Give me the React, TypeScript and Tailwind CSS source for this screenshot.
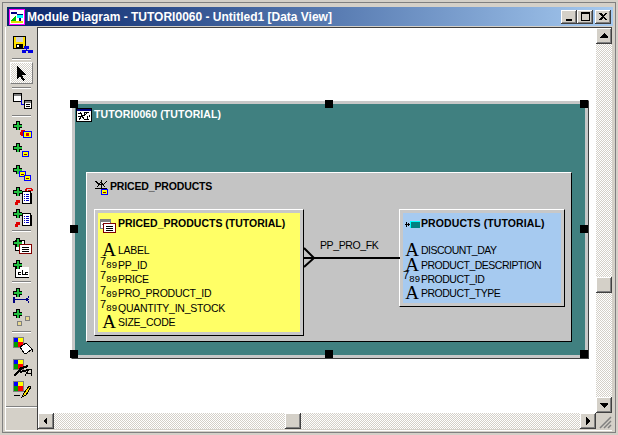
type Box = [number, number, number, number, string]

const BEVEL = 'shadow-[inset_-1px_-1px_#404040,inset_1px_1px_#ffffff,inset_-2px_-2px_#808080,inset_2px_2px_#d4d0c8] bg-[#d4d0c8]'
const DITHER = 'bg-[repeating-conic-gradient(#d4d0c8_0_25%,#ffffff_0_50%)] bg-[length:2px_2px]'

// little pixel-style drawing from plain rects
function Px({ boxes, w = 22, h = 18, children }: { boxes: Box[]; w?: number; h?: number; children?: React.ReactNode }) {
  return (
    <svg width={w} height={h} viewBox={`0 0 ${w} ${h}`} shapeRendering="crispEdges" className="block">
      {boxes.map((b, i) => (
        <rect key={i} x={b[0]} y={b[1]} width={b[2]} height={b[3]} fill={b[4]} />
      ))}
      {children}
    </svg>
  )
}

const plus: Box[] = [
  [3, 0, 4, 9, '#000'],
  [0, 3, 9, 4, '#000'],
  [4, 1, 2, 8, '#22c040'],
  [1, 4, 8, 2, '#22c040'],
]
const smallBox = (x: number, y: number): Box[] => [
  [x, y, 7, 6, '#0000ff'],
  [x + 1, y + 1, 5, 4, '#ffff00'],
  [x + 2, y + 3, 3, 1, '#800000'],
]
const listDoc: Box[] = [
  [9, 4, 9, 13, '#000'],
  [10, 5, 7, 11, '#fff'],
  [11, 7, 1, 1, '#0000c0'], [13, 7, 3, 1, '#0000c0'],
  [11, 9, 1, 1, '#0000c0'], [13, 9, 3, 1, '#0000c0'],
  [11, 11, 1, 1, '#0000c0'], [13, 11, 3, 1, '#0000c0'],
  [11, 13, 1, 1, '#0000c0'], [13, 13, 3, 1, '#0000c0'],
  [17, 6, 2, 11, '#000'],
  [3, 13, 4, 3, '#e00000'], [2, 15, 3, 3, '#e00000'],
]
const palette: Box[] = [
  [0, 0, 11, 11, '#808080'],
  [1, 1, 4, 4, '#0000ff'],
  [5, 1, 5, 4, '#ffff00'],
  [1, 5, 4, 5, '#00a000'],
  [5, 5, 5, 5, '#ff0000'],
]

const Sep = ({ className = '' }: { className?: string }) => (
  <div className={`w-[19px] h-[2px] ml-[6px] border-t border-[#808080] border-b-[1px] border-b-white ${className}`} />
)

const Arrow = ({ d }: { d: string }) => (
  <svg width="16" height="16" viewBox="0 0 16 16" shapeRendering="crispEdges"><path d={d} fill="#000" /></svg>
)

function ScrollBtn({ d }: { d: string }) {
  return <div className={`w-[16px] h-[16px] shrink-0 ${BEVEL}`}><Arrow d={d} /></div>
}

function Toolbar() {
  return (
    <div className="w-[33px] shrink-0 flex flex-col border-r border-[#404040] border-l border-l-white">
      <div className="ml-[7px] mt-[9px]">
        <Px boxes={[
          [0, 0, 13, 13, '#000'], [1, 1, 11, 11, '#ffe000'], [3, 1, 7, 5, '#d0d0d0'], [3, 8, 7, 4, '#000'], [4, 9, 2, 2, '#fff'],
          [11, 10, 5, 3, '#0000e0'], [13, 13, 1, 2, '#0000e0'], [9, 14, 11, 1, '#0000e0'], [9, 15, 4, 2, '#0000e0'], [15, 15, 5, 2, '#0000e0'],
        ]} />
      </div>
      <Sep className="mt-[4px]" />
      <div className={`mt-[2px] ml-[4px] w-[23px] h-[22px] border border-t-white border-l-white border-r-[#808080] border-b-[#808080] flex items-center justify-center ${DITHER}`}>
        <svg width="10" height="15" viewBox="0 0 10 15" shapeRendering="crispEdges"><path d="M0 0v13l3-3 3 5 2-1-3-5h4z" fill="#000" /></svg>
      </div>
      <Sep className="mt-[3px]" />
      <div className="ml-[7px] mt-[4px]">
        <Px boxes={[
          [0, 0, 9, 9, '#000'], [1, 1, 7, 7, '#fff'], [1, 1, 7, 2, '#808080'],
          [8, 7, 1, 5, '#0000e0'], [8, 11, 4, 1, '#0000e0'],
          [11, 7, 8, 9, '#000'], [12, 8, 6, 7, '#fff'], [12, 8, 6, 2, '#808080'], [13, 11, 4, 1, '#000'], [13, 13, 4, 1, '#000'],
        ]} />
      </div>
      <Sep className="mt-[4px]" />
      <div className="ml-[7px] mt-[4px]">
        <Px boxes={[
          ...plus, [8, 9, 4, 2, '#e00000'], [7, 11, 3, 3, '#e00000'], [8, 14, 3, 1, '#e00000'],
          [10, 10, 9, 7, '#0000ff'], [11, 11, 7, 5, '#ffff00'], [13, 12, 3, 3, '#e00000'],
        ]} />
      </div>
      <div className="ml-[7px] mt-[4px]">
        <Px boxes={[...plus, ...smallBox(9, 8)]} />
      </div>
      <div className="ml-[7px] mt-[4px]">
        <Px boxes={[...plus, ...smallBox(6, 6), ...smallBox(11, 10)]} />
      </div>
      <div className="ml-[7px] mt-[4px]">
        <Px boxes={[...plus, ...listDoc, [13, 1, 6, 1, '#e00000'], [12, 2, 2, 2, '#e00000'], [18, 2, 2, 2, '#e00000'], [15, 3, 3, 1, '#e00000']]} />
      </div>
      <div className="ml-[7px] mt-[4px]">
        <Px boxes={[...plus, ...listDoc]} />
      </div>
      <Sep className="mt-[3px]" />
      <div className="ml-[7px] mt-[6px]">
        <Px boxes={[
          [2, 2, 10, 11, '#000'], [3, 3, 8, 9, '#fff'], ...plus,
          [6, 6, 13, 10, '#800000'], [7, 7, 11, 8, '#fff'], [9, 9, 7, 1, '#000'], [9, 11, 7, 1, '#000'], [9, 13, 7, 1, '#000'],
        ]} />
      </div>
      <div className="ml-[7px] mt-[4px]">
        <Px boxes={[
          [2, 5, 1, 12, '#000'], [2, 17, 14, 1, '#000'], [3, 7, 13, 10, '#fff'], ...plus,
          [5, 12, 3, 1, '#000'], [5, 14, 3, 1, '#000'], [5, 12, 1, 3, '#000'], [9, 10, 1, 5, '#000'], [9, 14, 3, 1, '#000'], [13, 12, 2, 1, '#000'], [13, 14, 2, 1, '#000'], [12, 12, 1, 3, '#000'],
        ]} />
      </div>
      <Sep className="mt-[3px]" />
      <div className="ml-[7px] mt-[5px]">
        <Px boxes={[...plus, [1, 11, 15, 1, '#000080'], [0, 9, 2, 6, '#000080'], [15, 8, 1, 2, '#000080'], [13, 10, 2, 1, '#000080'], [13, 12, 2, 1, '#000080'], [15, 13, 1, 2, '#000080']]} />
      </div>
      <div className="ml-[7px] mt-[3px]">
        <Px boxes={[...plus, [4, 12, 5, 5, '#808080'], [5, 13, 3, 3, '#e8d890'], [12, 7, 5, 5, '#808080'], [13, 8, 3, 3, '#e8d890']]} />
      </div>
      <Sep className="mt-[4px]" />
      <div className="ml-[7px] mt-[4px]">
        <Px boxes={palette}>
          <path d="M7 10l6-4 6 6-5 4h-3z" fill="#fff" stroke="#000" />
          <path d="M19 12v3h1v-3z" fill="#000" />
        </Px>
      </div>
      <div className="ml-[7px] mt-[4px]">
        <Px boxes={palette}>
          <path d="M1 17l8-8M6 10l9-3M7 13l8-2" stroke="#000" fill="none" strokeWidth="2" />
          <path d="M12 17l4-7 2 0 1 7M14 14h5" stroke="#000" fill="none" />
        </Px>
      </div>
      <div className="ml-[7px] mt-[4px]">
        <Px boxes={[...palette, [1, 14, 6, 1, '#000']]}>
          <path d="M9 16l2-4 5-7 2 1-5 8z" fill="#ffe000" stroke="#000" />
        </Px>
      </div>
      <div className="mt-[7px] h-[2px] border-t border-[#808080] border-b border-b-white" />
    </div>
  )
}

const A = () => <span className="w-[18px] font-['Liberation_Serif'] text-[19px] leading-[14px] text-center">A</span>
const Num = () => (
  <span className="w-[18px] flex leading-[10px]">
    <span className="-mt-[3px] text-[11px]">7</span>
    <span className="mt-[1px] text-[9.5px] tracking-[0.4px]">89</span>
  </span>
)

function Col({ name, kind, track }: { name: string; kind: 'a' | 'n'; track: string }) {
  return (
    <div className="h-[14.4px] flex items-center">
      {kind === 'a' ? <A /> : <Num />}
      <span className={`text-[10.5px] leading-[14px] whitespace-nowrap ${track}`}>{name}</span>
    </div>
  )
}

function TableCard({ className, fill, icon, title, cols, track, titleTrack }: {
  className: string; fill: string; icon: React.ReactNode; title: string; cols: [string, 'a' | 'n'][]; track: string; titleTrack: string
}) {
  return (
    <div className={`absolute border border-t-white border-l-white border-r-black border-b-black bg-[#c8c8c8] p-[3px] ${className}`}>
      <div className={`h-full ${fill} pt-[4px]`}>
        <div className={`h-[14px] flex items-center font-bold text-[10.5px] text-black whitespace-nowrap ${titleTrack}`}>
          <span className="w-[18px] shrink-0">{icon}</span>
          {title}
        </div>
        <div className="mt-[12px] text-black">
          {cols.map(c => <Col key={c[0]} name={c[0]} kind={c[1]} track={track} />)}
        </div>
      </div>
    </div>
  )
}

const handles = [
  'left-[32px] top-[72px]', 'left-[287px] top-[72px]', 'left-[542px] top-[72px]',
  'left-[32px] top-[197px]', 'left-[542px] top-[197px]',
  'left-[32px] top-[322px]', 'left-[287px] top-[322px]', 'left-[542px] top-[322px]',
]

function Diagram() {
  return (
    <div className="relative flex-1 bg-white overflow-hidden">
      {/* module box */}
      <div className="absolute left-[33px] top-[72px] w-[518px] h-[259px] border border-t-white border-l-white border-r-[#404040] border-b-[#404040] bg-[#c8c8c8] p-[3px]">
        <div className="h-full bg-[#408080] relative">
          <div className="absolute left-[1px] top-[3px] flex items-center gap-[2px] text-white font-bold text-[10.5px] tracking-[0.1px]">
            <Px w={16} h={14} boxes={[[0, 0, 16, 14, '#000'], [1, 1, 14, 2, '#000080'], [1, 3, 14, 10, '#fff']]}>
              <path d="M2 5h3v2h3V4h5M2 8h4l2 3h5M3 12l3-4M8 8l3-3M11 8v4M4 4v2M13 7v2" stroke="#000" fill="none" />
            </Px>
            TUTORI0060 (TUTORIAL)
          </div>
          {/* group */}
          <div className="absolute left-[11px] top-[68px] w-[486px] h-[170px] border border-t-white border-l-white border-r-black border-b-black bg-[#c4c4c4]">
            <div className="absolute left-[7px] top-[6px] flex items-center gap-[1px] font-bold text-[10.5px] tracking-[-0.15px] text-black">
              <Px w={15} h={16} boxes={smallBox(7, 10)}>
                <path d="M1 2l4 3M13 2l-3 3M7 1v8M1 9h12M3 8l4-5 4 5M5 5h5" stroke="#000" fill="none" />
              </Px>
              PRICED_PRODUCTS
            </div>
            <TableCard
              className="left-[7px] top-[36px] w-[210px] h-[127px]"
              fill="bg-[#ffff66] pl-[2px]"
              track="tracking-[-0.25px]"
              titleTrack="tracking-[0px]"
              title="PRICED_PRODUCTS (TUTORIAL)"
              icon={
                <div className="mt-[3px]">
                  <Px w={16} h={14} boxes={[
                    [0, 0, 11, 10, '#808080'], [1, 1, 9, 8, '#fff'], [1, 1, 9, 2, '#808080'], [2, 5, 5, 1, '#808080'],
                    [3, 4, 13, 10, '#800000'], [4, 5, 11, 8, '#fff'], [6, 7, 7, 1, '#000'], [6, 9, 7, 1, '#000'], [6, 11, 7, 1, '#000'],
                  ]} />
                </div>
              }
              cols={[
                ['LABEL', 'a'], ['PP_ID', 'n'], ['PRICE', 'n'],
                ['PRO_PRODUCT_ID', 'n'], ['QUANTITY_IN_STOCK', 'n'], ['SIZE_CODE', 'a'],
              ]}
            />
            <TableCard
              className="left-[312px] top-[36px] w-[166px] h-[98px]"
              fill="bg-[#a6caf0]"
              track="tracking-[-0.5px]"
              titleTrack="tracking-[0.1px]"
              title="PRODUCTS (TUTORIAL)"
              icon={
                <div className="ml-[2px] mt-[2px]">
                  <Px w={16} h={10} boxes={[
                    [0, 4, 5, 1, '#000'], [1, 2, 1, 5, '#000'], [3, 3, 1, 3, '#000'],
                    [5, 1, 10, 7, '#00ffff'], [6, 2, 9, 6, '#008080'],
                  ]} />
                </div>
              }
              cols={[
                ['DISCOUNT_DAY', 'a'], ['PRODUCT_DESCRIPTION', 'a'],
                ['PRODUCT_ID', 'n'], ['PRODUCT_TYPE', 'a'],
              ]}
            />
            {/* relation line */}
            <svg width="97" height="22" viewBox="0 0 97 22" className="absolute left-[216px] top-[74px]">
              <path d="M1 1l10 10L1 20M0 11h97" stroke="#000" strokeWidth="2" fill="none" />
            </svg>
            <span className="absolute left-[233px] top-[65px] text-[10.5px] leading-[14px] tracking-[-0.4px] text-black">PP_PRO_FK</span>
          </div>
        </div>
      </div>
      {handles.map(h => <div key={h} className={`absolute w-[8px] h-[8px] bg-black ${h}`} />)}
    </div>
  )
}

function VScroll() {
  return (
    <div className="w-[16px] flex flex-col shrink-0">
      <ScrollBtn d="M8 5l4 4v1H4V9z" />
      <div className={`h-[233px] ${DITHER}`} />
      <div className={`h-[16px] ${BEVEL}`} />
      <div className={`flex-1 ${DITHER}`} />
      <ScrollBtn d="M4 6h8v1l-4 4-4-4z" />
    </div>
  )
}

function HScroll() {
  return (
    <div className="h-[16px] flex">
      <div className="flex-1 flex">
        <ScrollBtn d="M9 4v8L5 8z" />
        <div className={`w-[231px] ${DITHER}`} />
        <div className={`w-[16px] ${BEVEL}`} />
        <div className={`flex-1 ${DITHER}`} />
        <ScrollBtn d="M6 4l4 4-4 4z" />
      </div>
      <div className="w-[16px] shrink-0 bg-[#d4d0c8]">
        <svg width="16" height="16" viewBox="0 0 16 16">
          <path d="M15 4L4 15M15 8l-7 7M15 12l-3 3" stroke="#808080" strokeWidth="1.5" />
        </svg>
      </div>
    </div>
  )
}

function CapBtn({ children }: { children: React.ReactNode }) {
  return <div className={`w-[16px] h-[14px] flex items-center justify-center ${BEVEL}`}>{children}</div>
}

export default function App() {
  return (
    <div className="w-[618px] h-[435px] bg-[#d4d0c8] overflow-hidden font-['Liberation_Sans',sans-serif] p-[2px]">
      <div className="h-full border border-[#808080] pl-[2px] pr-[3px] pt-[4px] flex flex-col">
        {/* title bar */}
        <div className="ml-[2px] -mr-[1px] h-[19px] shrink-0 flex items-center bg-linear-to-r from-[#0a246a] to-[#a6caf0]">
          <div className="ml-[2px] mr-[2px]">
            <Px w={16} h={16} boxes={[
              [0, 0, 16, 16, '#ff00ff'], [1, 1, 14, 14, '#fff'], [2, 3, 6, 2, '#000080'],
              [8, 5, 6, 4, '#00ffff'], [8, 5, 6, 1, '#000080'], [10, 9, 2, 3, '#000080'],
              [2, 12, 12, 2, '#e0e000'],
            ]}>
              <path d="M2 12l5-6v6z" fill="#00c000" />
            </Px>
          </div>
          <span className="text-white font-bold text-[12px] whitespace-nowrap">Module Diagram - TUTORI0060 - Untitled1 [Data View]</span>
          <div className="ml-auto mr-[2px] flex">
            <CapBtn><div className="w-[6px] h-[2px] bg-black mt-[6px] -ml-[1px]" /></CapBtn>
            <CapBtn><div className="w-[9px] h-[9px] border border-t-2 border-black" /></CapBtn>
            <div className="w-[2px]" />
            <CapBtn>
              <svg width="8" height="7" viewBox="0 0 8 7" shapeRendering="crispEdges"><path d="M0 0h2l2 2 2-2h2L5 3.500 8 7H6L4 5 2 7H0l3-3.500z" fill="#000" /></svg>
            </CapBtn>
          </div>
        </div>
        {/* body */}
        <div className="flex h-[403px] mt-[1px]">
          <Toolbar />
          <div className="flex-1 flex flex-col border-t border-[#404040]">
            <div className="flex h-[385px]">
              <Diagram />
              <VScroll />
            </div>
            <HScroll />
          </div>
        </div>
        <div className="border-t border-white" />
      </div>
    </div>
  )
}
